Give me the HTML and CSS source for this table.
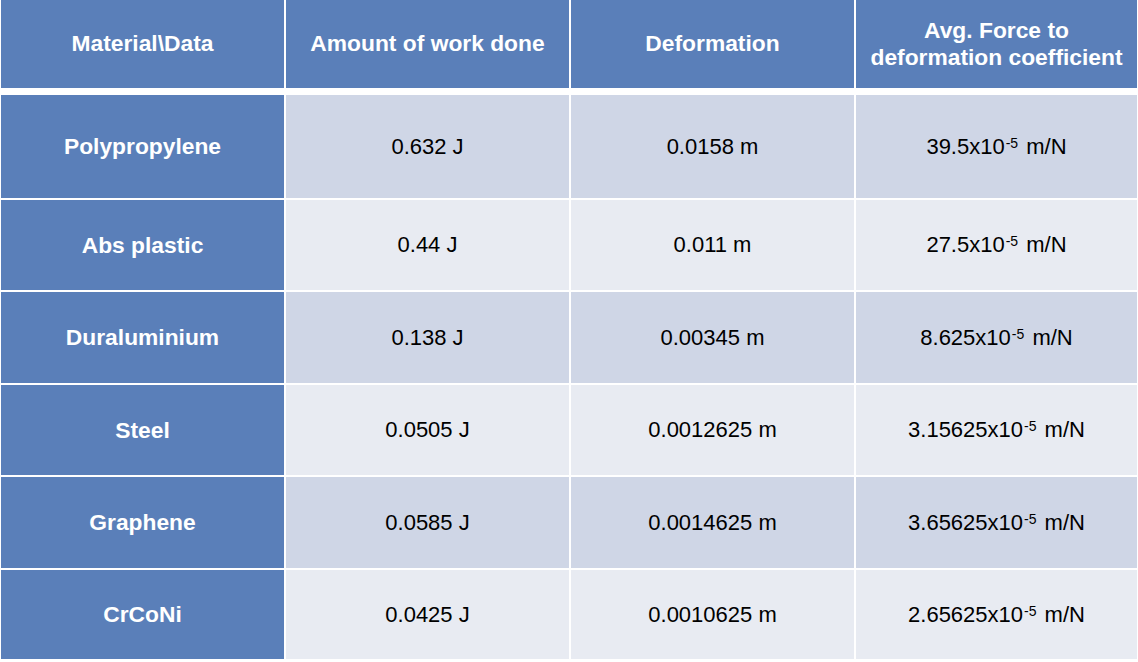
FILE: index.html
```html
<!DOCTYPE html>
<html>
<head>
<meta charset="utf-8">
<link rel="stylesheet" href="styles.css">
</head>
<body>
<div class="table">
  <div class="grid head">
    <div class="cell th"><span>Material\Data</span></div>
    <div class="cell th"><span>Amount of work done</span></div>
    <div class="cell th"><span>Deformation</span></div>
    <div class="cell th"><span>Avg. Force to<br>deformation coefficient</span></div>
  </div>
  <div class="grid body">
    <div class="cell rh"><span>Polypropylene</span></div>
    <div class="cell odd"><span>0.632 J</span></div>
    <div class="cell odd"><span>0.0158 m</span></div>
    <div class="cell odd"><span>39.5x10<sup>-5</sup> m/N</span></div>

    <div class="cell rh"><span>Abs plastic</span></div>
    <div class="cell even"><span>0.44 J</span></div>
    <div class="cell even"><span>0.011 m</span></div>
    <div class="cell even"><span>27.5x10<sup>-5</sup> m/N</span></div>

    <div class="cell rh"><span>Duraluminium</span></div>
    <div class="cell odd"><span>0.138 J</span></div>
    <div class="cell odd"><span>0.00345 m</span></div>
    <div class="cell odd"><span>8.625x10<sup>-5</sup> m/N</span></div>

    <div class="cell rh"><span>Steel</span></div>
    <div class="cell even"><span>0.0505 J</span></div>
    <div class="cell even"><span>0.0012625 m</span></div>
    <div class="cell even"><span>3.15625x10<sup>-5</sup> m/N</span></div>

    <div class="cell rh"><span>Graphene</span></div>
    <div class="cell odd"><span>0.0585 J</span></div>
    <div class="cell odd"><span>0.0014625 m</span></div>
    <div class="cell odd"><span>3.65625x10<sup>-5</sup> m/N</span></div>

    <div class="cell rh"><span>CrCoNi</span></div>
    <div class="cell even"><span>0.0425 J</span></div>
    <div class="cell even"><span>0.0010625 m</span></div>
    <div class="cell even"><span>2.65625x10<sup>-5</sup> m/N</span></div>
  </div>
</div>
</body>
</html>
```

FILE: styles.css
```css
html, body {
  margin: 0;
  padding: 0;
  background: #ffffff;
}
body {
  font-family: "Liberation Sans", Arial, Helvetica, sans-serif;
  padding-left: 1px;
}
.table {
  display: flex;
  flex-direction: column;
  width: 1137px;
}
.grid {
  display: grid;
  grid-template-columns: 283px 283px 283px 281px;
  column-gap: 2px;
}
.head {
  grid-template-rows: 88px;
}
.body {
  margin-top: 7px;
  grid-template-rows: 103px 90px 91px 90px 91px 89px;
  row-gap: 2px;
}
.cell {
  display: flex;
  align-items: center;
  justify-content: center;
  text-align: center;
  font-size: 22px;
  color: #000;
}
.th, .rh {
  background: #5a7fb9;
  color: #fff;
  font-weight: bold;
  font-size: 22.8px;
  line-height: 27px;
}
.th {
  padding-bottom: 1px;
}
.odd {
  background: #cfd6e6;
}
.even {
  background: #e8ebf2;
}
sup {
  font-size: 14px;
  line-height: 0;
  vertical-align: 6px;
  margin-left: 1px;
  margin-right: 2px;
}
```
